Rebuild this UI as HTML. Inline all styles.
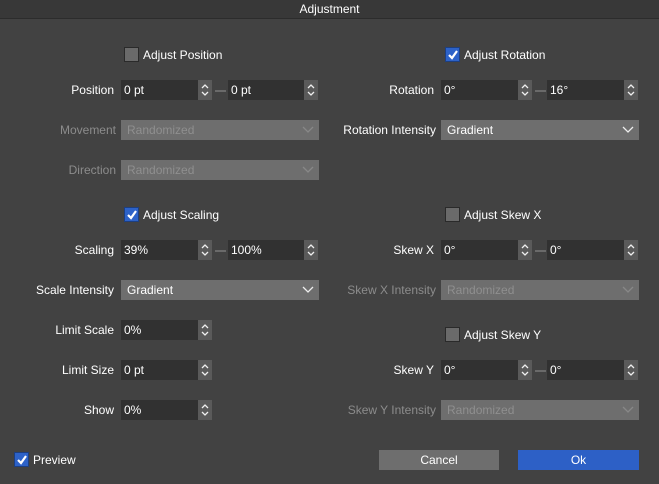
<!DOCTYPE html>
<html><head><meta charset="utf-8"><style>
*{box-sizing:border-box;margin:0;padding:0}
body{width:659px;height:484px;background:#424242;font-family:"Liberation Sans",sans-serif;font-size:12px;color:#fff;position:relative;overflow:hidden}
.t{position:absolute;left:0;top:0;width:659px;height:19px;background:#383838;border-bottom:1px solid #2c2c2c;text-align:center;line-height:19px;font-size:12px}
.lbl{position:absolute;height:20px;line-height:21px;text-align:right;white-space:nowrap}
.dis{color:#8c8c8c}
.in{position:absolute;height:20px;background:#313131;line-height:21px;padding-left:3px}
.sp{position:absolute;width:14px;height:20px;background:#5a5a5a}
.sp svg{position:absolute;left:2px;top:3px}
.dash{position:absolute;width:11px;height:2px;background:#6a6a6a}
.dd{position:absolute;height:20px;background:#6e6e6e;line-height:21px;padding-left:6px}
.dd.dis{color:#8f8f8f}
.dd svg{position:absolute;right:5px;top:6px}
.cb{position:absolute;width:15px;height:15px;background:#6a6a6a;border:1px solid #2a2a2a}
.cb.on{background:#2d62c8;border-color:#1d3f80}
.cb svg{position:absolute;left:1px;top:1px}
.cl{position:absolute;height:15px;line-height:17px;white-space:nowrap}
.btn{position:absolute;height:20px;line-height:21px;text-align:center}
</style></head><body>
<div class="t">Adjustment</div>

<div class="cb" style="left:124px;top:47px"></div><div class="cl" style="left:143px;top:47px">Adjust Position</div>
<div class="lbl" style="right:545px;top:80px">Position</div>
<div class="in" style="left:121px;top:80px;width:77px">0 pt</div>
<div class="sp" style="left:198px;top:80px"><svg width="10" height="14"><path d="M2 5L5 2L8 5M2 9L5 12L8 9" stroke="#eee" stroke-width="1.3" fill="none"/></svg></div>
<div class="dash" style="left:215px;top:90px"></div>
<div class="in" style="left:228px;top:80px;width:76px">0 pt</div>
<div class="sp" style="left:304px;top:80px"><svg width="10" height="14"><path d="M2 5L5 2L8 5M2 9L5 12L8 9" stroke="#eee" stroke-width="1.3" fill="none"/></svg></div>

<div class="lbl dis" style="right:543px;top:120px">Movement</div>
<div class="dd dis" style="left:121px;top:120px;width:198px">Randomized<svg width="12" height="8"><path d="M1 1L6 6L11 1" stroke="#888" stroke-width="1.3" fill="none"/></svg></div>
<div class="lbl dis" style="right:543px;top:160px">Direction</div>
<div class="dd dis" style="left:121px;top:160px;width:198px">Randomized<svg width="12" height="8"><path d="M1 1L6 6L11 1" stroke="#888" stroke-width="1.3" fill="none"/></svg></div>

<div class="cb on" style="left:124px;top:207px"><svg width="12" height="12"><path d="M2 6L5 9L10 2" stroke="#fff" stroke-width="2.2" fill="none"/></svg></div><div class="cl" style="left:143px;top:207px">Adjust Scaling</div>
<div class="lbl" style="right:545px;top:240px">Scaling</div>
<div class="in" style="left:121px;top:240px;width:77px">39%</div>
<div class="sp" style="left:198px;top:240px"><svg width="10" height="14"><path d="M2 5L5 2L8 5M2 9L5 12L8 9" stroke="#eee" stroke-width="1.3" fill="none"/></svg></div>
<div class="dash" style="left:215px;top:250px"></div>
<div class="in" style="left:228px;top:240px;width:76px">100%</div>
<div class="sp" style="left:304px;top:240px"><svg width="10" height="14"><path d="M2 5L5 2L8 5M2 9L5 12L8 9" stroke="#eee" stroke-width="1.3" fill="none"/></svg></div>

<div class="lbl" style="right:545px;top:280px">Scale Intensity</div>
<div class="dd" style="left:121px;top:280px;width:198px">Gradient<svg width="12" height="8"><path d="M1 1L6 6L11 1" stroke="#eee" stroke-width="1.3" fill="none"/></svg></div>

<div class="lbl" style="right:545px;top:320px">Limit Scale</div>
<div class="in" style="left:121px;top:320px;width:77px">0%</div>
<div class="sp" style="left:198px;top:320px"><svg width="10" height="14"><path d="M2 5L5 2L8 5M2 9L5 12L8 9" stroke="#eee" stroke-width="1.3" fill="none"/></svg></div>
<div class="lbl" style="right:545px;top:360px">Limit Size</div>
<div class="in" style="left:121px;top:360px;width:77px">0 pt</div>
<div class="sp" style="left:198px;top:360px"><svg width="10" height="14"><path d="M2 5L5 2L8 5M2 9L5 12L8 9" stroke="#eee" stroke-width="1.3" fill="none"/></svg></div>
<div class="lbl" style="right:545px;top:400px">Show</div>
<div class="in" style="left:121px;top:400px;width:77px">0%</div>
<div class="sp" style="left:198px;top:400px"><svg width="10" height="14"><path d="M2 5L5 2L8 5M2 9L5 12L8 9" stroke="#eee" stroke-width="1.3" fill="none"/></svg></div>

<div class="cb on" style="left:445px;top:47px"><svg width="12" height="12"><path d="M2 6L5 9L10 2" stroke="#fff" stroke-width="2.2" fill="none"/></svg></div><div class="cl" style="left:464px;top:47px">Adjust Rotation</div>
<div class="lbl" style="right:225px;top:80px">Rotation</div>
<div class="in" style="left:441px;top:80px;width:77px">0°</div>
<div class="sp" style="left:518px;top:80px"><svg width="10" height="14"><path d="M2 5L5 2L8 5M2 9L5 12L8 9" stroke="#eee" stroke-width="1.3" fill="none"/></svg></div>
<div class="dash" style="left:535px;top:90px"></div>
<div class="in" style="left:547px;top:80px;width:77px">16°</div>
<div class="sp" style="left:624px;top:80px"><svg width="10" height="14"><path d="M2 5L5 2L8 5M2 9L5 12L8 9" stroke="#eee" stroke-width="1.3" fill="none"/></svg></div>
<div class="lbl" style="right:223px;top:120px">Rotation Intensity</div>
<div class="dd" style="left:441px;top:120px;width:198px">Gradient<svg width="12" height="8"><path d="M1 1L6 6L11 1" stroke="#eee" stroke-width="1.3" fill="none"/></svg></div>

<div class="cb" style="left:445px;top:207px"></div><div class="cl" style="left:464px;top:207px">Adjust Skew X</div>
<div class="lbl" style="right:225px;top:240px">Skew X</div>
<div class="in" style="left:441px;top:240px;width:77px">0°</div>
<div class="sp" style="left:518px;top:240px"><svg width="10" height="14"><path d="M2 5L5 2L8 5M2 9L5 12L8 9" stroke="#eee" stroke-width="1.3" fill="none"/></svg></div>
<div class="dash" style="left:535px;top:250px"></div>
<div class="in" style="left:547px;top:240px;width:77px">0°</div>
<div class="sp" style="left:624px;top:240px"><svg width="10" height="14"><path d="M2 5L5 2L8 5M2 9L5 12L8 9" stroke="#eee" stroke-width="1.3" fill="none"/></svg></div>
<div class="lbl dis" style="right:223px;top:280px">Skew X Intensity</div>
<div class="dd dis" style="left:441px;top:280px;width:198px">Randomized<svg width="12" height="8"><path d="M1 1L6 6L11 1" stroke="#888" stroke-width="1.3" fill="none"/></svg></div>

<div class="cb" style="left:445px;top:327px"></div><div class="cl" style="left:464px;top:327px">Adjust Skew Y</div>
<div class="lbl" style="right:225px;top:360px">Skew Y</div>
<div class="in" style="left:441px;top:360px;width:77px">0°</div>
<div class="sp" style="left:518px;top:360px"><svg width="10" height="14"><path d="M2 5L5 2L8 5M2 9L5 12L8 9" stroke="#eee" stroke-width="1.3" fill="none"/></svg></div>
<div class="dash" style="left:535px;top:370px"></div>
<div class="in" style="left:547px;top:360px;width:77px">0°</div>
<div class="sp" style="left:624px;top:360px"><svg width="10" height="14"><path d="M2 5L5 2L8 5M2 9L5 12L8 9" stroke="#eee" stroke-width="1.3" fill="none"/></svg></div>
<div class="lbl dis" style="right:223px;top:400px">Skew Y Intensity</div>
<div class="dd dis" style="left:441px;top:400px;width:198px">Randomized<svg width="12" height="8"><path d="M1 1L6 6L11 1" stroke="#888" stroke-width="1.3" fill="none"/></svg></div>

<div class="cb on" style="left:14px;top:452px"><svg width="12" height="12"><path d="M2 6L5 9L10 2" stroke="#fff" stroke-width="2.2" fill="none"/></svg></div><div class="cl" style="left:33px;top:452px">Preview</div>
<div class="btn" style="left:379px;top:450px;width:120px;background:#6e6e6e">Cancel</div>
<div class="btn" style="left:518px;top:450px;width:121px;background:#2d60c6">Ok</div>
</body></html>
